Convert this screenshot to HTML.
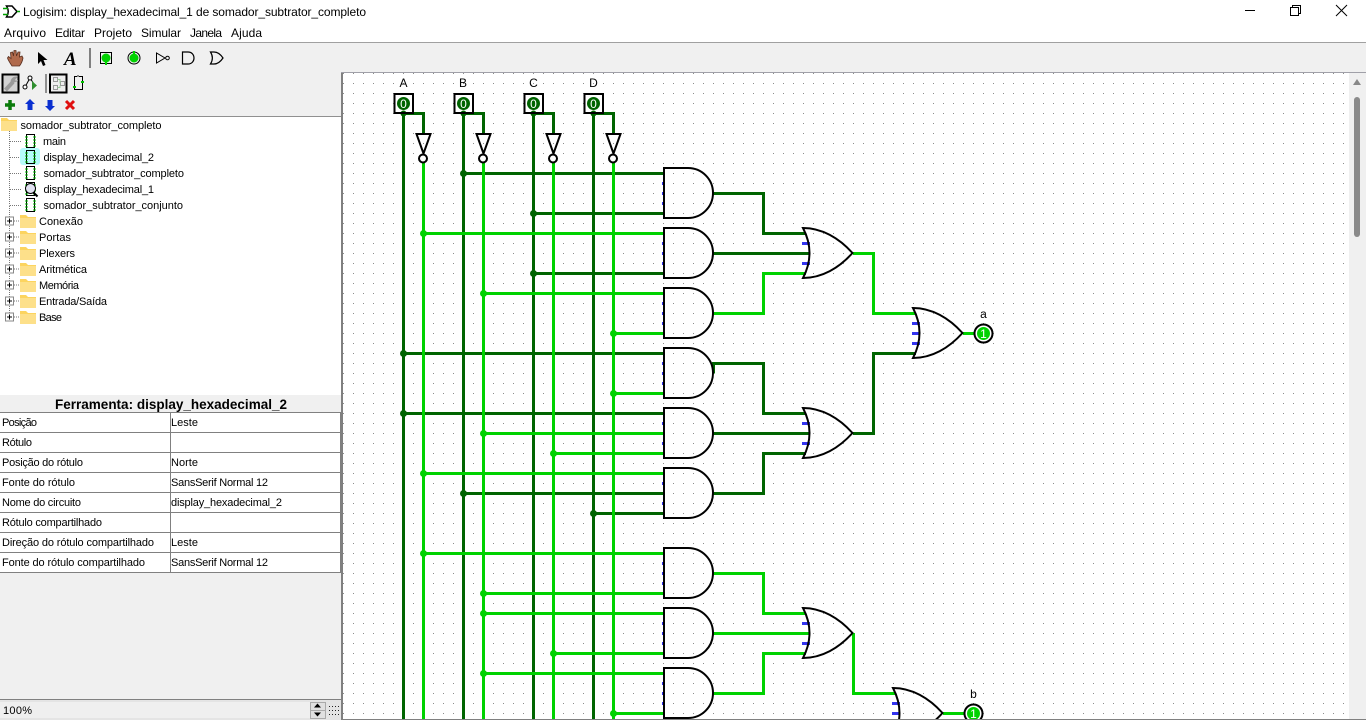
<!DOCTYPE html>
<html><head><meta charset="utf-8"><title>Logisim</title>
<style>
html,body{margin:0;padding:0;background:#fff;width:1366px;height:720px;overflow:hidden}
svg{display:block}
text{font-family:"Liberation Sans",sans-serif;fill:#000}
.t{font-size:11px}
.m{font-size:12px}
.d{stroke:#006400;stroke-width:3;fill:none}
.l{stroke:#00d200;stroke-width:3;fill:none}
.k{stroke:#000;stroke-width:2;fill:none}
.jd{fill:#006400}.jl{fill:#00d200}
.b{fill:#3333ee}
.dot{stroke:#777;stroke-width:1;stroke-dasharray:1 1;fill:none}
.g{stroke:#808080;stroke-width:1;fill:none}
</style></head><body>
<svg width="1366" height="720" viewBox="0 0 1366 720" xmlns="http://www.w3.org/2000/svg">
<defs>
<pattern id="grid" width="10" height="10" patternUnits="userSpaceOnUse"><rect x="3" y="3" width="1" height="1" fill="#8c8c8c"/></pattern>
<clipPath id="cv"><rect x="343" y="73" width="1006" height="646"/></clipPath>
<g id="and"><path d="M664 168H688A25 25 0 0 1 688 218H664Z" fill="none" stroke="#000" stroke-width="2"/></g>
<g id="blue"><rect class="b" x="662" y="182" width="3" height="3"/><rect class="b" x="662" y="192" width="3" height="3"/><rect class="b" x="662" y="202" width="3" height="3"/></g>
<g id="or"><path d="M803 228C822 228 839 238 852.500 253C839 268 822 278 803 278Q816 253 803 228Z" fill="none" stroke="#000" stroke-width="2"/></g>
<g id="ci"><path d="M26 -6.500H35M26 6.500H35M26.500 -6V6M34.500 -6V6" stroke="#000" fill="none"/><path d="M25 -4H28M25 -1H28M25 2H28M25 5H28M33 -4H36M33 -1H36M33 2H36M33 5H36" stroke="#00c000" stroke-width="1" stroke-dasharray="none"/></g>
<g id="fo"><path d="M0 -6H6L8 -4H16V7H0Z" fill="#fcd45f"/><path d="M0 -3H16V7H0Z" fill="#fde08a"/></g>
<g id="pl"><rect x="5.5" y="-4.5" width="8" height="8" fill="#fff" stroke="#888"/><path d="M7 -.5H12M9.5 -3V2" stroke="#000"/><path class="dot" d="M14 -.5H20"/></g>
<g id="pin"><circle r="6.5" fill="#006400"/></g>
</defs>

<!-- backgrounds -->
<rect width="1366" height="42" fill="#fff"/>
<rect y="42" width="1366" height="678" fill="#f0f0f0"/>
<rect y="42" width="1366" height="1" fill="#a0a0a0"/>

<!-- title bar -->
<path d="M6.500 6H12L17 11.500L12 17H6.500Q10 11.500 6.500 6Z" fill="none" stroke="#000" stroke-width="1.500"/>
<path d="M3 8.500H8M3 14.500H8M17 11.500H20" stroke="#00a000" stroke-width="1.500"/>
<text class="m" x="23" y="16" textLength="343" lengthAdjust="spacing">Logisim: display_hexadecimal_1 de somador_subtrator_completo</text>
<path d="M1245 10.500H1255" stroke="#000"/>
<path d="M1290.500 7.500H1298.500V15.500H1290.500ZM1292.500 7V5.500H1300.500V13.500H1299" fill="none" stroke="#000"/>
<path d="M1336 5L1347 16M1347 5L1336 16" stroke="#000"/>

<!-- menu -->
<text class="m" x="4" y="37" textLength="42" lengthAdjust="spacing">Arquivo</text>
<text class="m" x="55" y="37" textLength="30" lengthAdjust="spacing">Editar</text>
<text class="m" x="94" y="37" textLength="38" lengthAdjust="spacing">Projeto</text>
<text class="m" x="141" y="37" textLength="40" lengthAdjust="spacing">Simular</text>
<text class="m" x="190" y="37" textLength="32" lengthAdjust="spacing">Janela</text>
<text class="m" x="231" y="37" textLength="31" lengthAdjust="spacing">Ajuda</text>

<!-- toolbar row 1 -->
<path d="M12 66C10 63 8 60 7.500 58L8.500 56.500L11 58.500L10.500 52.500L12.500 52L13.500 56L14 50.500H16L16.500 56L18 52H20L19.500 57L22 56L23 58C22.500 61 21 64 19.500 66Z" fill="#b06a4c" stroke="#5a3020" stroke-width=".8"/>
<path d="M38 52V64L41 61L43 66L45.500 65L43.500 60H47.500Z" fill="#000"/>
<text x="64" y="65" style="font-family:'Liberation Serif',serif;font-size:19px;font-weight:bold;font-style:italic">A</text>
<rect x="89" y="48" width="2" height="20" fill="#808080"/>
<rect x="100.500" y="52.500" width="11" height="11" fill="none" stroke="#000"/>
<circle cx="106" cy="58" r="4.500" fill="#00d200"/><rect x="105" y="60" width="2" height="5" fill="#00d200"/>
<circle cx="134" cy="58" r="6" fill="none" stroke="#000"/><circle cx="134" cy="58" r="4.500" fill="#00d200"/><rect x="133" y="51" width="2" height="5" fill="#00d200"/>
<path d="M156.500 53V63L165 58Z" fill="none" stroke="#000"/><circle cx="167.500" cy="58" r="1.800" fill="none" stroke="#000"/>
<path d="M182.500 52H188C196 52 196 64 188 64H182.500Z" fill="none" stroke="#000" stroke-width="1.200"/>
<path d="M210.500 52H214C218 52 221 55 223 58C221 61 218 64 214 64H210.500C213 60 213 56 210.500 52Z" fill="none" stroke="#000" stroke-width="1.200"/>

<!-- toolbar row 2 -->
<rect x="2.500" y="74.500" width="16" height="18" fill="#d2d2d2" stroke="#000" stroke-width="2"/>
<path d="M5.500 90L13 82" stroke="#9a9a9a" stroke-width="4"/><path d="M11.500 84C10 80 13 76.500 17 77L14.500 79.500L15.500 81.500L18 80.500" fill="#9a9a9a" stroke="#9a9a9a"/>
<path d="M25 87L30 78L34 84" fill="none" stroke="#000"/><circle cx="25" cy="87" r="2" fill="#fff" stroke="#000"/><circle cx="30" cy="78" r="2" fill="#fff" stroke="#000"/>
<path d="M32 81V90L37 85.500Z" fill="#2f8f2f"/>
<rect x="45" y="74" width="2" height="19" fill="#909090"/>
<rect x="50" y="74.500" width="16.500" height="18" fill="#eee" stroke="#000" stroke-width="2"/>
<rect x="53.500" y="77.500" width="4" height="4" fill="none" stroke="#999"/><rect x="53.500" y="85.500" width="4" height="4" fill="none" stroke="#999"/><rect x="60.500" y="81.500" width="4" height="4" fill="none" stroke="#999"/><path d="M57.500 79.500H60V83.500M57.500 87.500H60V85.500" stroke="#9c9" fill="none"/>
<rect x="74.500" y="76.500" width="8" height="13" fill="none" stroke="#000"/><rect x="73" y="86" width="3" height="2" fill="#00c000"/><rect x="81" y="81" width="3" height="2" fill="#00c000"/><rect x="77" y="75" width="2" height="2" fill="#888"/>

<!-- toolbar row 3 -->
<path d="M10 100V110M5 105H15" stroke="#0a7a0a" stroke-width="3.500"/>
<path d="M30 99L35 104H32.500V110H27.500V104H25Z" fill="#0a2fd0"/>
<path d="M50 111L55 106H52.500V100H47.500V106H45Z" fill="#0a2fd0"/>
<path d="M66 101L74 109M74 101L66 109" stroke="#e01010" stroke-width="3"/>

<!-- tree panel -->
<rect x="0" y="116" width="342" height="279" fill="#fff"/>
<rect x="0" y="116" width="342" height="1" fill="#909090"/>
<use href="#fo" x="1" y="124"/>
<text class="t" x="20.500" y="129" textLength="141" lengthAdjust="spacing">somador_subtrator_completo</text>
<path class="dot" d="M9.500 131V205.500M10 141.500H22M10 157.500H22M10 173.500H22M10 189.500H22M10 205.500H22M9.500 206V318"/>
<rect x="20" y="148" width="20" height="17" rx="3" fill="#b5fbfb"/>
<use href="#ci" y="141"/><use href="#ci" y="157"/><use href="#ci" y="173"/><use href="#ci" y="189"/><use href="#ci" y="205"/>
<circle cx="30.500" cy="188.500" r="5" fill="#e2e2f2" stroke="#000"/><path d="M33.500 192.500L37.500 196.500" stroke="#000" stroke-width="2"/>
<text class="t" x="43" y="145" textLength="23" lengthAdjust="spacing">main</text>
<text class="t" x="43.500" y="161" textLength="110.500" lengthAdjust="spacing">display_hexadecimal_2</text>
<text class="t" x="43.500" y="177" textLength="140.500" lengthAdjust="spacing">somador_subtrator_completo</text>
<text class="t" x="43.500" y="193" textLength="110.500" lengthAdjust="spacing">display_hexadecimal_1</text>
<text class="t" x="43.500" y="209" textLength="139.500" lengthAdjust="spacing">somador_subtrator_conjunto</text>
<use href="#pl" y="221.500"/><use href="#fo" x="20" y="221"/><text class="t" x="39" y="225" textLength="44" lengthAdjust="spacing">Conexão</text>
<use href="#pl" y="237.500"/><use href="#fo" x="20" y="237"/><text class="t" x="39" y="241" textLength="32" lengthAdjust="spacing">Portas</text>
<use href="#pl" y="253.500"/><use href="#fo" x="20" y="253"/><text class="t" x="39" y="257" textLength="36" lengthAdjust="spacing">Plexers</text>
<use href="#pl" y="269.500"/><use href="#fo" x="20" y="269"/><text class="t" x="39" y="273" textLength="48" lengthAdjust="spacing">Aritmética</text>
<use href="#pl" y="285.500"/><use href="#fo" x="20" y="285"/><text class="t" x="39" y="289" textLength="40" lengthAdjust="spacing">Memória</text>
<use href="#pl" y="301.500"/><use href="#fo" x="20" y="301"/><text class="t" x="39" y="305" textLength="68" lengthAdjust="spacing">Entrada/Saída</text>
<use href="#pl" y="317.500"/><use href="#fo" x="20" y="317"/><text class="t" x="39" y="321" textLength="23" lengthAdjust="spacing">Base</text>

<!-- attribute panel -->
<text x="55" y="409" style="font-size:13.500px;font-weight:bold" textLength="232" lengthAdjust="spacing">Ferramenta: display_hexadecimal_2</text>
<rect x="0" y="412" width="341" height="161" fill="#fff"/>
<path class="g" d="M0 412.500H341M0 432.500H341M0 452.500H341M0 472.500H341M0 492.500H341M0 512.500H341M0 532.500H341M0 552.500H341M0 572.500H341M170.500 412V573M340.500 412V573"/>
<text class="t" x="2" y="426" textLength="35" lengthAdjust="spacing">Posição</text>
<text class="t" x="2" y="446" textLength="30" lengthAdjust="spacing">Rótulo</text>
<text class="t" x="2" y="466" textLength="81" lengthAdjust="spacing">Posição do rótulo</text>
<text class="t" x="2" y="486" textLength="73" lengthAdjust="spacing">Fonte do rótulo</text>
<text class="t" x="2" y="506" textLength="79" lengthAdjust="spacing">Nome do circuito</text>
<text class="t" x="2" y="526" textLength="100" lengthAdjust="spacing">Rótulo compartilhado</text>
<text class="t" x="2" y="546" textLength="152" lengthAdjust="spacing">Direção do rótulo compartilhado</text>
<text class="t" x="2" y="566" textLength="143" lengthAdjust="spacing">Fonte do rótulo compartilhado</text>
<text class="t" x="171" y="426" textLength="27" lengthAdjust="spacing">Leste</text>
<text class="t" x="171" y="466" textLength="27" lengthAdjust="spacing">Norte</text>
<text class="t" x="171" y="486" textLength="97" lengthAdjust="spacing">SansSerif Normal 12</text>
<text class="t" x="171" y="506" textLength="111" lengthAdjust="spacing">display_hexadecimal_2</text>
<text class="t" x="171" y="546" textLength="27" lengthAdjust="spacing">Leste</text>
<text class="t" x="171" y="566" textLength="97" lengthAdjust="spacing">SansSerif Normal 12</text>

<!-- zoom bar -->
<rect x="0" y="699" width="342" height="1" fill="#808080"/>
<rect x="0" y="700" width="342" height="20" fill="#e4e4e4"/>
<rect x="0" y="702" width="310" height="16" fill="#efefef"/>
<text class="t" x="3" y="714" textLength="29" lengthAdjust="spacing">100%</text>
<rect x="310.500" y="702.500" width="15" height="8" fill="#e0e0e0" stroke="#aaa"/><rect x="310.500" y="710.500" width="15" height="8" fill="#e0e0e0" stroke="#aaa"/>
<path d="M314 707.500H321L317.500 703.500ZM314 712.500H321L317.500 716.500Z" fill="#000"/>
<path d="M329 706.500H340M329 710.500H340M329 714.500H340" stroke="#222" stroke-dasharray="1 2"/>

<!-- canvas -->
<rect x="343" y="72" width="1023" height="648" fill="#fff"/>
<rect x="343" y="73" width="1006" height="646" fill="url(#grid)"/>
<rect x="341" y="72" width="2" height="648" fill="#808080"/>
<rect x="341" y="72" width="1025" height="1" fill="#a0a0a8"/>
<rect x="343" y="719" width="1023" height="1" fill="#808080"/>
<!-- scrollbar -->
<rect x="1349" y="73" width="17" height="646" fill="#f0f0f0"/>
<path d="M1353 85H1361L1357 79Z" fill="#888"/>
<rect x="1354" y="97" width="6" height="140" rx="3" fill="#8a8a8a"/>

<g clip-path="url(#cv)">
<!-- blue pins -->
<use href="#blue"/><use href="#blue" y="60"/><use href="#blue" y="120"/><use href="#blue" y="180"/><use href="#blue" y="240"/><use href="#blue" y="300"/><use href="#blue" y="380"/><use href="#blue" y="440"/><use href="#blue" y="500"/>
<rect class="b" x="802" y="242" width="8" height="3"/><rect class="b" x="802" y="262" width="8" height="3"/>
<rect class="b" x="802" y="422" width="8" height="3"/><rect class="b" x="802" y="442" width="8" height="3"/>
<rect class="b" x="802" y="622" width="8" height="3"/><rect class="b" x="802" y="642" width="8" height="3"/>
<rect class="b" x="912" y="322" width="8" height="3"/><rect class="b" x="912" y="332" width="8" height="3"/><rect class="b" x="912" y="342" width="8" height="3"/>
<rect class="b" x="892" y="702" width="8" height="3"/><rect class="b" x="892" y="712" width="8" height="3"/>

<!-- wires dark -->
<path class="d" d="M403.500 113V720M463.500 113V720M533.500 113V720M593.500 113V720
M403.500 113.500H423.500V134M463.500 113.500H483.500V134M533.500 113.500H553.500V134M593.500 113.500H613.500V134
M463 173.500H664M533 213.500H664M533 273.500H664M403 353.500H664M403 413.500H664M463 493.500H664M593 513.500H664
M712 193.500H763.500V233.500H806M712 253.500H810M713.500 373.500V363.500H763.500V413.500H806M712 433.500H810M712 493.500H763.500V453.500H806M853 433.500H873.500V353.500H916"/>
<!-- wires light -->
<path class="l" d="M423.500 163V720M483.500 163V720M553.500 163V720M613.500 163V720
M423 233.500H664M483 293.500H664M613 333.500H664M613 393.500H664M483 433.500H664M553 453.500H664M423 473.500H664
M423 553.500H664M483 593.500H664M483 613.500H664M553 653.500H664M483 673.500H664M613 713.500H664
M712 313.500H763.500V273.500H806M853 253.500H873.500V313.500H916M963 333.500H975
M712 573.500H763.500V613.500H806M712 633.500H810M712 693.500H763.500V653.500H806M853.500 633V693.500H896M943 713.500H965"/>

<!-- junctions -->
<g class="jd"><circle cx="403.500" cy="113.500" r="3"/><circle cx="463.500" cy="113.500" r="3"/><circle cx="533.500" cy="113.500" r="3"/><circle cx="593.500" cy="113.500" r="3"/>
<circle cx="463.500" cy="173.500" r="3.500"/><circle cx="533.500" cy="213.500" r="3.500"/><circle cx="533.500" cy="273.500" r="3.500"/><circle cx="403.500" cy="353.500" r="3.500"/><circle cx="403.500" cy="413.500" r="3.500"/><circle cx="463.500" cy="493.500" r="3.500"/><circle cx="593.500" cy="513.500" r="3.500"/></g>
<g class="jl"><circle cx="423.500" cy="233.500" r="3.500"/><circle cx="483.500" cy="293.500" r="3.500"/><circle cx="613.500" cy="333.500" r="3.500"/><circle cx="613.500" cy="393.500" r="3.500"/><circle cx="483.500" cy="433.500" r="3.500"/><circle cx="553.500" cy="453.500" r="3.500"/><circle cx="423.500" cy="473.500" r="3.500"/><circle cx="423.500" cy="553.500" r="3.500"/><circle cx="483.500" cy="593.500" r="3.500"/><circle cx="483.500" cy="613.500" r="3.500"/><circle cx="553.500" cy="653.500" r="3.500"/><circle cx="483.500" cy="673.500" r="3.500"/><circle cx="613.500" cy="713.500" r="3.500"/></g>

<!-- AND gates -->
<use href="#and"/><use href="#and" y="60"/><use href="#and" y="120"/><use href="#and" y="180"/><use href="#and" y="240"/><use href="#and" y="300"/><use href="#and" y="380"/><use href="#and" y="440"/><use href="#and" y="500"/>
<!-- OR gates -->
<use href="#or"/><use href="#or" y="180"/><use href="#or" y="380"/><use href="#or" x="110" y="80"/><use href="#or" x="90" y="460"/>

<!-- input pins -->
<g class="k"><rect x="394.500" y="94" width="18.500" height="19"/><rect x="454.500" y="94" width="18.500" height="19"/><rect x="524.500" y="94" width="18.500" height="19"/><rect x="584.500" y="94" width="18.500" height="19"/></g>
<use href="#pin" x="403.500" y="103.500"/><use href="#pin" x="463.500" y="103.500"/><use href="#pin" x="533.500" y="103.500"/><use href="#pin" x="593.500" y="103.500"/>
<g style="font-size:12px" text-anchor="middle">
<text x="403.500" y="107.800" style="fill:#fff">0</text><text x="463.500" y="107.800" style="fill:#fff">0</text><text x="533.500" y="107.800" style="fill:#fff">0</text><text x="593.500" y="107.800" style="fill:#fff">0</text>
</g>
<g style="font-size:12px" text-anchor="middle">
<text x="403.500" y="87">A</text><text x="463" y="87">B</text><text x="533.500" y="87">C</text><text x="593.500" y="87">D</text>
<text x="983.500" y="318">a</text><text x="973.500" y="698">b</text>
</g>

<!-- NOT gates -->
<g stroke="#000" stroke-width="2" fill="none">
<path d="M416.500 134H430.500L423.500 153.500Z"/><circle cx="423" cy="158.500" r="4" fill="#fff"/>
<path d="M476.500 134H490.500L483.500 153.500Z"/><circle cx="483" cy="158.500" r="4" fill="#fff"/>
<path d="M546.500 134H560.500L553.500 153.500Z"/><circle cx="553" cy="158.500" r="4" fill="#fff"/>
<path d="M606.500 134H620.500L613.500 153.500Z"/><circle cx="613" cy="158.500" r="4" fill="#fff"/>
</g>

<!-- output pins -->
<circle cx="983.500" cy="333.500" r="9" fill="#fff" stroke="#000" stroke-width="2"/><circle cx="983.500" cy="333.500" r="6.500" fill="#00d200"/>
<text x="983.500" y="337.800" text-anchor="middle" style="font-size:12px;fill:#fff">1</text>
<circle cx="973.500" cy="713.500" r="9" fill="#fff" stroke="#000" stroke-width="2"/><circle cx="973.500" cy="713.500" r="6.500" fill="#00d200"/>
<text x="973.500" y="717.800" text-anchor="middle" style="font-size:12px;fill:#fff">1</text>
</g>
</svg>
</body></html>
